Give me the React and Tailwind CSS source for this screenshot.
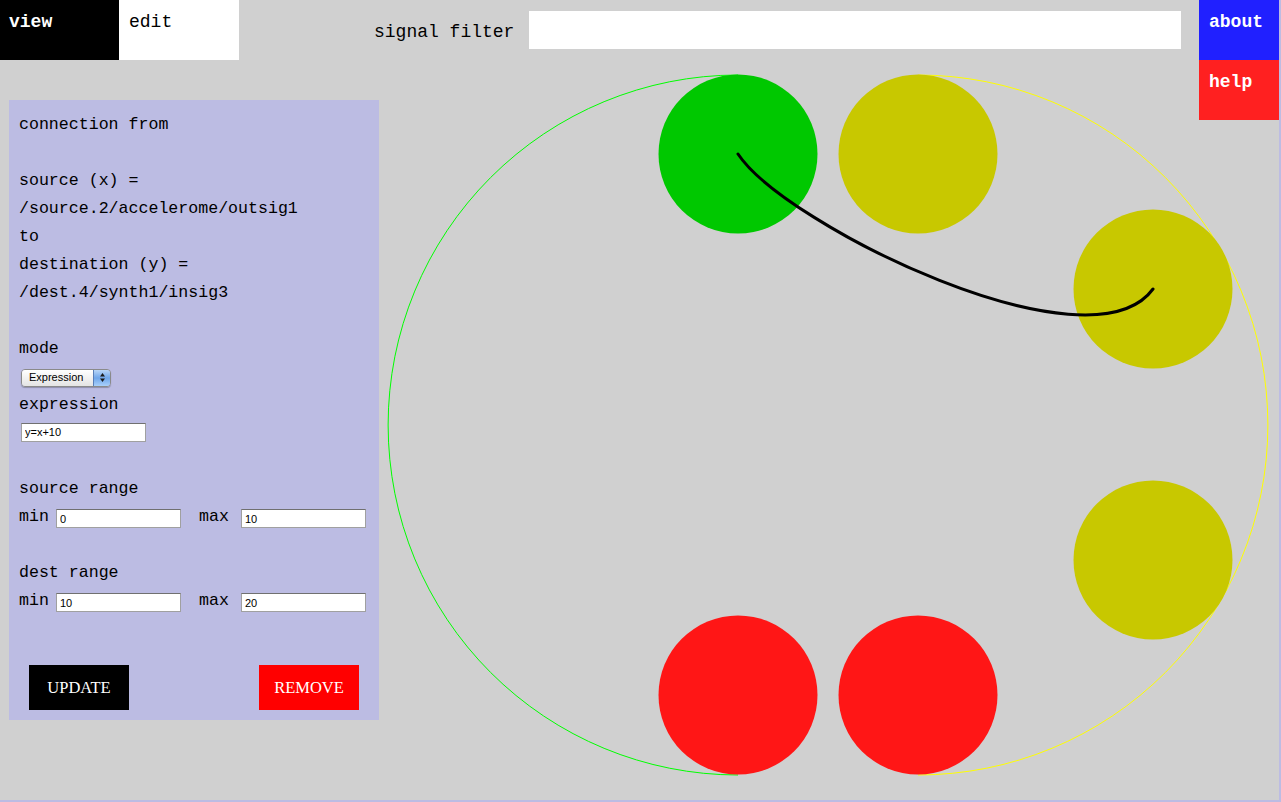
import React, { useState } from "react";

const mono = { fontFamily: '"Liberation Mono", "Courier New", monospace' };

const nodes = [
  { cx: 738, cy: 154, fill: "#00c800" },
  { cx: 918, cy: 154, fill: "#c8c800" },
  { cx: 1153, cy: 289, fill: "#c8c800" },
  { cx: 1153, cy: 560, fill: "#c8c800" },
  { cx: 738, cy: 695, fill: "#ff1616" },
  { cx: 918, cy: 695, fill: "#ff1616" },
];

const SmallInput = ({ value, className = "" }) => (
  <input
    defaultValue={value}
    className={`h-[19px] w-[125px] bg-white border border-[#a0a0a0] border-t-[#707070] px-[3px] text-[11px] text-black outline-none ${className}`}
    style={{ fontFamily: '"Liberation Sans", Arial, sans-serif' }}
  />
);

const ModeSelect = () => (
  <div className="ml-[2px] flex h-[18px] w-[90px] items-stretch overflow-hidden rounded-[4px] border border-[#8a8a8a] shadow-[0_1px_1px_rgba(0,0,0,0.25)]">
    <div
      className="flex flex-1 items-center bg-gradient-to-b from-white to-[#e4e4e4] pl-[7px] text-[11px] leading-none text-black"
      style={{ fontFamily: '"Liberation Sans", Arial, sans-serif' }}
    >
      Expression
    </div>
    <div className="flex w-[17px] items-center justify-center border-l border-[#5a7fb8] bg-gradient-to-b from-[#b9d6f7] via-[#6fa6ea] to-[#a9d0fa]">
      <svg width="7" height="11" viewBox="0 0 7 11">
        <path d="M3.5 1 L6 4.5 H1 Z" fill="#1a1a1a" />
        <path d="M3.5 10 L6 6.5 H1 Z" fill="#1a1a1a" />
      </svg>
    </div>
  </div>
);

const RangeRow = ({ min, max }) => (
  <div className="flex h-[28px] items-center">
    <span className="w-[37px]">min</span>
    <SmallInput value={min} className="mt-[3px]" />
    <span className="ml-[18px] w-[42px]">max</span>
    <SmallInput value={max} className="mt-[3px]" />
  </div>
);

const ConnectionPanel = () => (
  <div
    className="ml-[9px] mt-[40px] flex h-[620px] w-[370px] flex-col bg-[#bcbce3] px-[10px] pb-[10px] pt-[11px] text-[16.6px] leading-[28px] text-black"
    style={mono}
  >
    <div>connection from</div>
    <div className="h-[28px]" />
    <div>source (x) =</div>
    <div>/source.2/accelerome/outsig1</div>
    <div>to</div>
    <div>destination (y) =</div>
    <div>/dest.4/synth1/insig3</div>
    <div className="h-[28px]" />
    <div>mode</div>
    <div className="flex h-[28px] items-center pt-[1px]">
      <ModeSelect />
    </div>
    <div>expression</div>
    <div className="flex h-[28px] items-center">
      <SmallInput value="y=x+10" className="ml-[2px] mt-[-2px]" />
    </div>
    <div className="h-[28px]" />
    <div>source range</div>
    <RangeRow min="0" max="10" />
    <div className="h-[28px]" />
    <div>dest range</div>
    <RangeRow min="10" max="20" />

    <div
      className="mt-[50px] flex justify-between px-[10px] text-[16.5px]"
      style={{ fontFamily: '"Liberation Serif", "Times New Roman", serif' }}
    >
      <button className="h-[45px] w-[100px] bg-black text-white">UPDATE</button>
      <button className="h-[45px] w-[100px] bg-[#ff0000] text-white">REMOVE</button>
    </div>
  </div>
);

const GraphView = () => (
  <svg
    width="820"
    height="740"
    viewBox="379 60 820 740"
    className="shrink-0 overflow-visible"
  >
    {/* device ring: sources on the left, destinations on the right */}
    <path d="M738 75 A350 350 0 0 0 738 775" fill="none" stroke="#00ff00" strokeWidth="1" />
    <path d="M918 75 A350 350 0 0 1 918 775" fill="none" stroke="#ffff00" strokeWidth="1" />

    {nodes.map((n, i) => (
      <circle key={i} cx={n.cx} cy={n.cy} r="79.5" fill={n.fill} />
    ))}

    <path
      d="M738 154 C785 225, 1090 375, 1153 289"
      fill="none"
      stroke="#000"
      strokeWidth="3"
      strokeLinecap="round"
    />
  </svg>
);

const App = () => {
  const [tab, setTab] = useState("edit");

  return (
    <div className="h-[802px] w-[1281px] overflow-hidden bg-[#bcbce3]">
      <div className="flex h-[800px] w-[1279px] bg-[#d0d0d0]" style={mono}>
        {/* Main column */}
        <div className="flex w-[1199px] flex-col">
          {/* Top bar */}
          <div className="flex h-[60px] items-start">
            <div
              onClick={() => setTab("view")}
              className="h-[60px] w-[119px] cursor-pointer bg-black pl-[9px] pt-[10px] text-[18px] font-bold leading-[24px] text-white"
            >
              view
            </div>
            <div
              onClick={() => setTab("edit")}
              className="h-[60px] w-[120px] cursor-pointer bg-white pl-[10px] pt-[10px] text-[18px] leading-[24px] text-black"
            >
              edit
            </div>
            <div className="ml-[135px] flex h-[60px] items-center">
              <span className="mt-[4px] text-[18px] leading-[24px] text-black">signal filter</span>
              <input className="ml-[15px] h-[38px] w-[652px] bg-white px-2 text-[16px] outline-none" />
            </div>
          </div>

          {/* Body */}
          <div className="flex flex-1 items-start">
            <ConnectionPanel />
            <GraphView />
          </div>
        </div>

        {/* Right column */}
        <div className="flex w-[80px] flex-col text-[18px] font-bold leading-[24px] text-white">
          <div className="h-[60px] bg-[#2020ff] pl-[10px] pt-[10px]">about</div>
          <div className="h-[60px] bg-[#ff2020] pl-[10px] pt-[10px]">help</div>
        </div>
      </div>
    </div>
  );
};

export default App;
